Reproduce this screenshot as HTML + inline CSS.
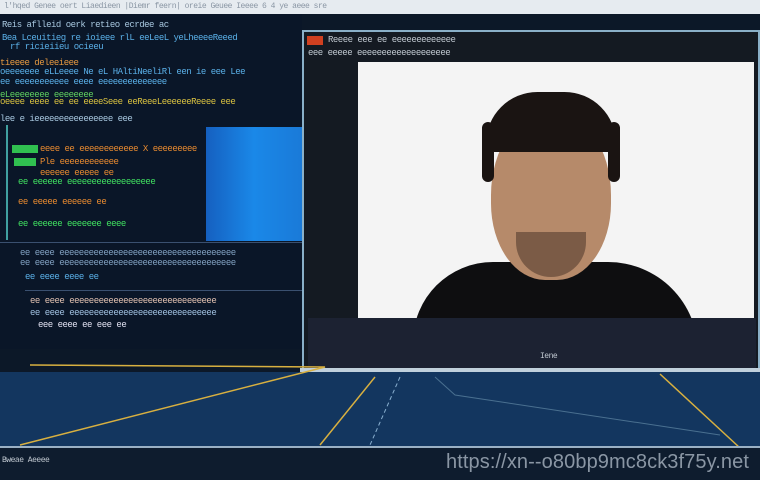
<!DOCTYPE html>
<html><head><style>
body{margin:0;width:760px;height:480px;overflow:hidden;background:#0c1828;font-family:"Liberation Sans",sans-serif;position:relative}
div{position:absolute}
.t{font-family:"Liberation Mono",monospace;font-size:9px;white-space:nowrap;letter-spacing:-0.5px}
</style></head><body>
<div style="left:0;top:0;width:760px;height:14px;background:#e6ebf0"></div>
<div class="t" style="left:4px;top:2px;color:#8a96a4;font-size:8px">l'hqed Genee oert Liaedieen |Diemr feern| oreie Geuee Ieeee 6 4 ye aeee sre</div>
<div style="left:0;top:14px;width:302px;height:335px;background:#0a1628"></div>
<div class="t" style="left:2px;top:20px;color:#a8c8e0">Reis aflleid oerk retieo ecrdee ac</div>
<div class="t" style="left:2px;top:33px;color:#5ab0e8">Bea  Lceuitieg re ioieee rlL eeLeeL yeLheeeeReeed</div>
<div class="t" style="left:10px;top:42px;color:#5ab0e8">rf ricieiieu ocieeu</div>
<div class="t" style="left:0;top:58px;color:#e89a40">tieeee deleeieee</div>
<div class="t" style="left:0;top:67px;color:#5ab0e8">oeeeeeee eLLeeee Ne eL HAltiNeeliRl een ie eee Lee</div>
<div class="t" style="left:0;top:77px;color:#5ab0e8">ee eeeeeeeeeee eeee eeeeeeeeeeeeee</div>
<div class="t" style="left:0;top:90px;color:#60d060">eLeeeeeeee eeeeeeee</div>
<div class="t" style="left:0;top:97px;color:#d8c040">oeeee eeee ee ee eeeeSeee eeReeeLeeeeeeReeee eee</div>
<div class="t" style="left:0;top:114px;color:#a8c8e0">lee e ieeeeeeeeeeeeeeee eee</div>
<div style="left:6px;top:125px;width:2px;height:115px;background:#40a0a0"></div>
<div style="left:12px;top:145px;width:26px;height:8px;background:#30c050"></div>
<div class="t" style="left:40px;top:144px;color:#e88a30">eeee ee eeeeeeeeeeee  X eeeeeeeee</div>
<div style="left:14px;top:158px;width:22px;height:8px;background:#30c050"></div>
<div class="t" style="left:40px;top:157px;color:#e88a30">Ple eeeeeeeeeeee</div>
<div class="t" style="left:40px;top:168px;color:#e88a30">eeeeee eeeee ee</div>
<div class="t" style="left:18px;top:177px;color:#40e060">ee eeeeee eeeeeeeeeeeeeeeeee</div>
<div class="t" style="left:18px;top:197px;color:#e88a30">ee eeeee eeeeee ee</div>
<div class="t" style="left:18px;top:219px;color:#40e060">ee eeeeee eeeeeee eeee</div>
<div style="left:206px;top:127px;width:96px;height:114px;background:linear-gradient(90deg,#1560c0,#1a88e8 50%,#1a7ad8)"></div>
<div style="left:0;top:242px;width:302px;height:1px;background:#3a5070"></div>
<div class="t" style="left:20px;top:248px;color:#80a0c0">ee eeee eeeeeeeeeeeeeeeeeeeeeeeeeeeeeeeeeeee</div>
<div class="t" style="left:20px;top:258px;color:#80a0c0">ee eeee eeeeeeeeeeeeeeeeeeeeeeeeeeeeeeeeeeee</div>
<div class="t" style="left:25px;top:272px;color:#5ab0e8">ee eeee eeee ee</div>
<div style="left:25px;top:290px;width:277px;height:1px;background:#3a5070"></div>
<div class="t" style="left:30px;top:296px;color:#e0c0b0">ee eeee eeeeeeeeeeeeeeeeeeeeeeeeeeeeee</div>
<div class="t" style="left:30px;top:308px;color:#a0c0e0">ee eeee eeeeeeeeeeeeeeeeeeeeeeeeeeeeee</div>
<div class="t" style="left:38px;top:320px;color:#e0e0f0">eee eeee ee eee  ee</div>
<div style="left:302px;top:30px;width:458px;height:340px;background:#141a22;border:2px solid #8ab0c8;box-sizing:border-box"></div>
<div style="left:307px;top:36px;width:16px;height:9px;background:#d04020"></div>
<div class="t" style="left:328px;top:35px;color:#c0c8d0">Reeee  eee  ee  eeeeeeeeeeeee</div>
<div class="t" style="left:308px;top:48px;color:#c0c8d0">eee eeeee eeeeeeeeeeeeeeeeeee</div>
<div style="left:358px;top:62px;width:396px;height:258px;background:#f4f4f4;overflow:hidden">
 <div style="left:55px;top:200px;width:285px;height:100px;background:#0e0e10;border-radius:80px 90px 0 0"></div>
 <div style="left:157px;top:165px;width:72px;height:50px;background:#9a7258;border-radius:0 0 36px 36px"></div>
 <div style="left:133px;top:48px;width:120px;height:170px;background:#b68a6a;border-radius:50% 50% 45% 45%"></div>
 <div style="left:128px;top:30px;width:130px;height:60px;background:#1a1412;border-radius:60px 60px 10px 10px"></div>
 <div style="left:124px;top:60px;width:12px;height:60px;background:#1a1412;border-radius:6px"></div>
 <div style="left:250px;top:60px;width:12px;height:60px;background:#1a1412;border-radius:6px"></div>
 <div style="left:158px;top:170px;width:70px;height:45px;background:#4a3428;border-radius:0 0 35px 35px;opacity:.55"></div>
</div>
<div style="left:308px;top:318px;width:448px;height:50px;background:#1c2232"></div>
<div class="t" style="left:540px;top:352px;color:#c0c8d0;font-size:8px">Iene</div>
<div style="left:300px;top:368px;width:460px;height:4px;background:#c0d0dc"></div>
<div style="left:0;top:372px;width:760px;height:76px;background:#13365f"></div>
<svg style="position:absolute;left:0;top:360px" width="760" height="90">
<path d="M30 5 L325 7 L20 85" stroke="#d8b040" stroke-width="1.5" fill="none"/>
<path d="M375 17 L320 85" stroke="#d8b040" stroke-width="1.5" fill="none"/>
<path d="M400 17 L370 85" stroke="#8ab0d0" stroke-width="1" fill="none" stroke-dasharray="4 3"/>
<path d="M435 17 L455 35 L720 75" stroke="#4a7090" stroke-width="1" fill="none"/>
<path d="M660 14 L740 88" stroke="#d8b040" stroke-width="1.5" fill="none"/>
</svg>
<div style="left:0;top:446px;width:760px;height:2px;background:#9ab0c4"></div>
<div style="left:0;top:448px;width:760px;height:32px;background:#0e1c2e"></div>
<div class="t" style="left:2px;top:456px;color:#c0c8d0;font-size:8px">Bweae Aeeee</div>
<div style="left:446px;top:451px;color:#8a96a4;font-size:20px;letter-spacing:0.1px">https://xn--o80bp9mc8ck3f75y.net</div>
</body></html>
